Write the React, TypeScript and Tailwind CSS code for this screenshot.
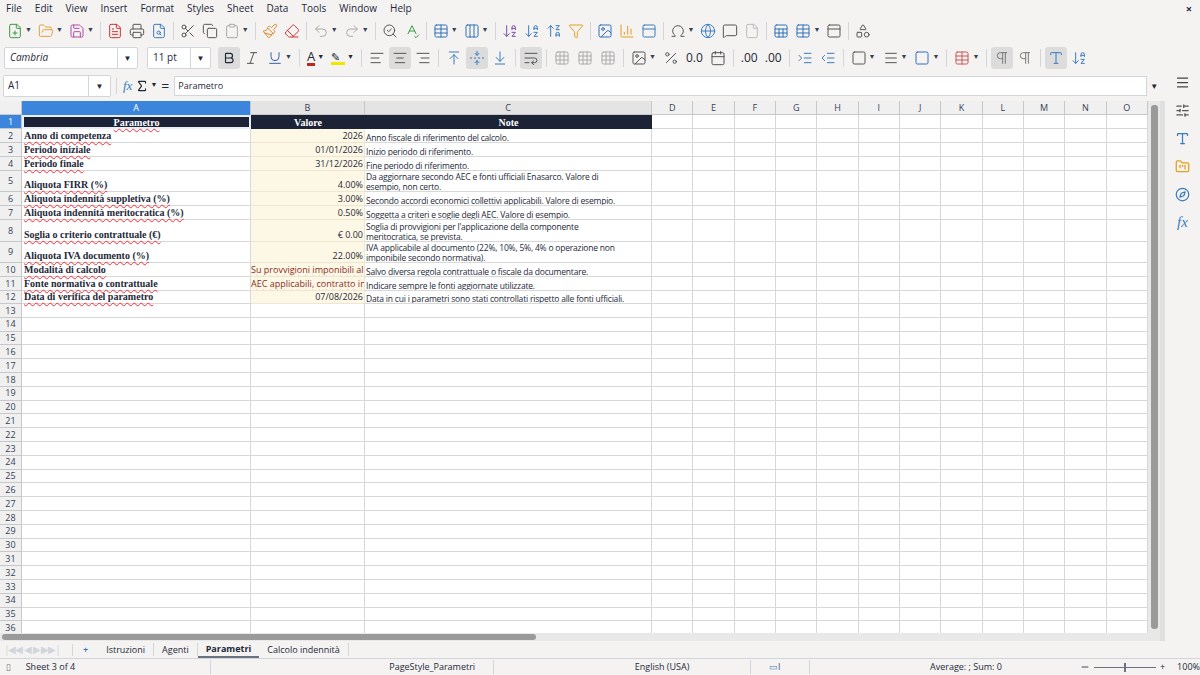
import React from "react";
import {
  FilePlus, FolderOpen, Save, FileText, Printer, FileSearch, Scissors, Copy, Clipboard, Paintbrush, Eraser,
  Undo2, Redo2, SearchCheck, SpellCheck, Table, Columns3, ArrowDownAZ, ArrowUpZA, Filter, Image, BarChart3,
  Omega, Globe, MessageSquare, File, Sheet, PanelTop, Shapes, Bold, Italic, Underline, AlignLeft, AlignCenter,
  AlignRight, ArrowUpToLine, FoldVertical, ArrowDownToLine, WrapText, Grid3x3, Percent, Calendar, IndentIncrease,
  IndentDecrease, Square, Minus, Menu, SlidersHorizontal, Type, FolderKanban, Compass, Pilcrow, Sigma
} from "lucide-react";

const sans = { fontFamily: '"Open Sans","Noto Sans",sans-serif' };
const serif = { fontFamily: '"Liberation Serif","DejaVu Serif",serif' };

const Ic = ({ I, c = "#555", dd }: { I: any; c?: string; dd?: boolean }) => (
  <div className="flex items-center h-[22px] px-[3px]">
    <I size={16} color={c} strokeWidth={1.5} />
    {dd && <span className="text-[7px] text-gray-700 ml-[2px]">▼</span>}
  </div>
);
const Sep = () => <div className="w-px h-[18px] bg-gray-300 mx-[3px]" />;

const rowsData: { h: number; a: string; b: string; c: string[]; bl?: boolean }[] = [
  { h: 14, a: "Anno di competenza", b: "2026", c: ["Anno fiscale di riferimento del calcolo."] },
  { h: 14, a: "Periodo iniziale", b: "01/01/2026", c: ["Inizio periodo di riferimento."] },
  { h: 14, a: "Periodo finale", b: "31/12/2026", c: ["Fine periodo di riferimento."] },
  { h: 21, a: "Aliquota FIRR (%)", b: "4.00%", c: ["Da aggiornare secondo AEC e fonti ufficiali Enasarco. Valore di", "esempio, non certo."] },
  { h: 14, a: "Aliquota indennità suppletiva (%)", b: "3.00%", c: ["Secondo accordi economici collettivi applicabili. Valore di esempio."] },
  { h: 14, a: "Aliquota indennità meritocratica (%)", b: "0.50%", c: ["Soggetta a criteri e soglie degli AEC. Valore di esempio."] },
  { h: 22, a: "Soglia o criterio contrattuale (€)", b: "€ 0.00", c: ["Soglia di provvigioni per l'applicazione della componente", "meritocratica, se prevista."] },
  { h: 21, a: "Aliquota IVA documento (%)", b: "22.00%", c: ["IVA applicabile al documento (22%, 10%, 5%, 4% o operazione non", "imponibile secondo normativa)."] },
  { h: 14, a: "Modalità di calcolo", b: "Su provvigioni imponibili al", c: ["Salvo diversa regola contrattuale o fiscale da documentare."], bl: true },
  { h: 14, a: "Fonte normativa o contrattuale", b: "AEC applicabili, contratto in", c: ["Indicare sempre le fonti aggiornate utilizzate."], bl: true },
  { h: 13, a: "Data di verifica del parametro", b: "07/08/2026", c: ["Data in cui i parametri sono stati controllati rispetto alle fonti ufficiali."] },
];

const extra = ["D", "E", "F", "G", "H", "I", "J", "K", "L", "M", "N", "O"];
const wavy = "underline decoration-wavy decoration-red-500 decoration-[1px] underline-offset-2";

function Extra() {
  return (
    <>
      {extra.map((e) => (
        <div key={e} className="w-[41.33px] shrink-0 border-r border-b border-[#d8d8d8]" />
      ))}
    </>
  );
}
function RowHead({ n, h, sel }: { n: number; h: number; sel?: boolean }) {
  return (
    <div
      className={`w-[22px] shrink-0 flex items-center justify-center text-[9px] border-r border-b border-[#c8c8c8] ${sel ? "bg-[#3b86dc] text-white" : "bg-[#f0f0f0] text-gray-700"}`}
      style={{ height: h, ...sans }}
    >
      {n}
    </div>
  );
}

export default function App() {
  return (
    <div className="w-[1200px] h-[675px] bg-[#f4f3f1] overflow-hidden flex flex-col text-gray-800" style={sans}>
      <div className="h-[17px] flex items-center text-[10px] px-[6px] gap-[13px] relative">
        {["File", "Edit", "View", "Insert", "Format", "Styles", "Sheet", "Data", "Tools", "Window", "Help"].map((m) => (
          <span key={m}>{m}</span>
        ))}
        <span className="absolute right-[8px] top-[1px] text-[11px] font-bold">×</span>
      </div>
      <div className="h-[27px] flex items-center px-[4px]">
        <Ic I={FilePlus} c="#3a9a45" dd /><Ic I={FolderOpen} c="#e2a23b" dd /><Ic I={Save} c="#b04aa8" dd /><Sep />
        <Ic I={FileText} c="#c33" /><Ic I={Printer} /><Ic I={FileSearch} c="#3b7bbf" /><Sep />
        <Ic I={Scissors} /><Ic I={Copy} /><Ic I={Clipboard} c="#aaa" dd /><Sep />
        <Ic I={Paintbrush} c="#d98a2b" /><Ic I={Eraser} c="#c33" /><Sep />
        <Ic I={Undo2} c="#aaa" dd /><Ic I={Redo2} c="#aaa" dd /><Sep />
        <Ic I={SearchCheck} /><Ic I={SpellCheck} c="#3a9a45" /><Sep />
        <Ic I={Table} c="#2f6fb8" dd /><Ic I={Columns3} c="#2f6fb8" dd /><Sep />
        <Ic I={ArrowDownAZ} c="#7a4ca8" /><Ic I={ArrowDownAZ} c="#3b7bbf" /><Ic I={ArrowUpZA} c="#3b7bbf" /><Ic I={Filter} c="#e0a020" /><Sep />
        <Ic I={Image} c="#2f6fb8" /><Ic I={BarChart3} c="#e0a020" /><Ic I={PanelTop} c="#3b7bbf" /><Sep />
        <Ic I={Omega} dd /><Ic I={Globe} c="#3b7bbf" /><Ic I={MessageSquare} /><Ic I={File} c="#bbb" /><Sep />
        <Ic I={Sheet} c="#2f6fb8" /><Ic I={Table} c="#2f6fb8" dd /><Ic I={PanelTop} /><Sep />
        <Ic I={Shapes} />
      </div>
      <div className="h-[27px] flex items-center px-[4px] gap-[1px]">
        <div className="w-[134px] h-[22px] bg-white border border-gray-300 rounded-[2px] flex items-center text-[10px] italic pl-[5px] justify-between">
          Cambria<span className="w-[20px] border-l border-gray-300 h-full flex items-center justify-center not-italic text-[8px]">▼</span>
        </div>
        <div className="w-[64px] h-[22px] ml-[8px] bg-white border border-gray-300 rounded-[2px] flex items-center text-[10px] pl-[5px] justify-between">
          11 pt<span className="w-[20px] border-l border-gray-300 h-full flex items-center justify-center text-[8px]">▼</span>
        </div>
        <div className="ml-[6px] w-[22px] h-[22px] bg-[#dcdcdc] rounded-[3px] flex items-center justify-center"><Bold size={14} /></div>
        <Ic I={Italic} /><Ic I={Underline} c="#3b5fa8" dd /><Sep />
        <div className="flex items-center px-[3px]"><span className="text-[13px] border-b-[3px] border-[#c0261e] leading-[14px]">A</span><span className="text-[7px] ml-[2px]">▼</span></div>
        <div className="flex items-center px-[3px]"><span className="w-[14px] h-[14px] border-b-[3px] border-[#f2e600] text-[11px] leading-[11px]">✎</span><span className="text-[7px] ml-[2px]">▼</span></div>
        <Sep />
        <Ic I={AlignLeft} /><div className="bg-[#dcdcdc] rounded-[3px]"><Ic I={AlignCenter} /></div><Ic I={AlignRight} /><Sep />
        <Ic I={ArrowUpToLine} c="#3b7bbf" /><div className="bg-[#dcdcdc] rounded-[3px]"><Ic I={FoldVertical} c="#3b7bbf" /></div><Ic I={ArrowDownToLine} c="#3b7bbf" /><Sep />
        <div className="bg-[#dcdcdc] rounded-[3px]"><Ic I={WrapText} /></div><Sep />
        <Ic I={Grid3x3} c="#aaa" /><Ic I={Grid3x3} c="#aaa" /><Ic I={Grid3x3} c="#aaa" /><Sep />
        <Ic I={Image} dd /><Ic I={Percent} /><span className="text-[12px] px-[3px]">0.0</span><Ic I={Calendar} /><Sep />
        <span className="text-[12px] px-[3px]">.00</span><span className="text-[12px] px-[3px]">.00</span><Sep />
        <Ic I={IndentIncrease} c="#3b7bbf" /><Ic I={IndentDecrease} c="#3b7bbf" /><Sep />
        <Ic I={Square} dd /><Ic I={Menu} dd /><Ic I={Square} c="#2f6fb8" dd /><Sep />
        <Ic I={Table} c="#c55" dd /><Sep />
        <div className="bg-[#dcdcdc] rounded-[3px]"><Ic I={Pilcrow} c="#777" /></div><Ic I={Pilcrow} c="#777" /><Sep />
        <div className="bg-[#dcdcdc] rounded-[3px]"><Ic I={Type} c="#3b7bbf" /></div><Ic I={ArrowDownAZ} c="#3b7bbf" />
      </div>
      <div className="h-[25px] mt-[2px] flex items-center pl-[3px]">
        <div className="w-[108px] h-[22px] bg-white border border-gray-300 rounded-[2px] flex items-center justify-between text-[10px] pl-[4px]">
          A1<span className="w-[22px] border-l border-gray-300 h-full flex items-center justify-center text-[8px]">▼</span>
        </div>
        <div className="w-px h-[16px] bg-gray-300 ml-[5px]" />
        <span className="text-[13px] italic text-[#3b7bbf] ml-[6px]" style={serif}>fx</span>
        <Sigma size={14} className="ml-[3px]" /><span className="text-[7px] ml-[1px]">▼</span>
        <span className="text-[14px] ml-[4px]">=</span>
        <div className="ml-[5px] w-[973px] h-[20px] bg-white border border-gray-300 text-[9px] flex items-center pl-[3px]">Parametro</div>
        <span className="text-[8px] ml-[3px]">▼</span>
      </div>
      <div className="flex flex-1 min-h-0 mt-[3px]">
        <div className="w-[1160px] flex flex-col bg-white">
          <div className="flex flex-1 min-h-0">
            <div className="w-[1148px] flex flex-col overflow-hidden">
              <div className="flex h-[14px] text-[9px] text-gray-700 shrink-0">
                <div className="w-[22px] bg-[#f0f0f0] border-r border-b border-[#c8c8c8]" />
                <div className="w-[229px] bg-[#3b86dc] text-white flex items-center justify-center border-r border-[#c8c8c8]">A</div>
                <div className="w-[114px] bg-[#e4e4e4] flex items-center justify-center border-r border-b border-[#c8c8c8]">B</div>
                <div className="w-[287px] bg-[#e4e4e4] flex items-center justify-center border-r border-b border-[#c8c8c8]">C</div>
                {extra.map((e) => (
                  <div key={e} className="w-[41.33px] bg-[#f0f0f0] flex items-center justify-center border-r border-b border-[#c8c8c8]">{e}</div>
                ))}
              </div>
              <div className="flex h-[14px] shrink-0">
                <RowHead n={1} h={14} sel />
                <div className="w-[229px] bg-[#1c2336] text-white text-[10px] font-bold flex items-center justify-center border-2 border-[#e9eef6]" style={serif}>
                  <span className={wavy}>Parametro</span>
                </div>
                <div className="w-[114px] bg-[#1c2336] text-white text-[10px] font-bold flex items-center justify-center" style={serif}><span className={wavy}>Valore</span></div>
                <div className="w-[287px] bg-[#1c2336] text-white text-[10px] font-bold flex items-center justify-center" style={serif}>Note</div>
                <Extra />
              </div>
              {rowsData.map((r, i) => (
                <div key={i} className="flex shrink-0" style={{ height: r.h }}>
                  <RowHead n={i + 2} h={r.h} />
                  <div className="w-[229px] border-r border-b border-[#d8d8d8] flex items-end pl-[2px] text-[10px] font-bold leading-[12px] whitespace-nowrap" style={serif}>
                    <span className={wavy}>{r.a}</span>
                  </div>
                  <div className={`w-[114px] bg-[#fdf8e6] border-r border-b border-[#ece6d2] flex items-end text-[9px] leading-[12px] whitespace-nowrap overflow-hidden ${r.bl ? "justify-start text-[#8a2c1e]" : "justify-end pr-[1px]"}`}>
                    <span className={r.bl ? wavy : ""}>{r.b}</span>
                  </div>
                  <div className="w-[287px] border-r border-b border-[#d8d8d8] flex flex-col justify-end pl-[1px] text-[8.5px] leading-[9.5px] whitespace-nowrap overflow-hidden">
                    {r.c.map((t, j) => <div key={j} className="tracking-[-0.2px]">{t}</div>)}
                  </div>
                  <Extra />
                </div>
              ))}
              {Array.from({ length: 24 }, (_, k) => (
                <div key={k} className="flex shrink-0 h-[13.8px]">
                  <RowHead n={k + 13} h={13.8} />
                  <div className="w-[229px] border-r border-b border-[#d8d8d8]" />
                  <div className="w-[114px] border-r border-b border-[#d8d8d8]" />
                  <div className="w-[287px] border-r border-b border-[#d8d8d8]" />
                  <Extra />
                </div>
              ))}
            </div>
            <div className="w-[12px] bg-[#e8e8e8] flex justify-center pt-[4px] pb-[4px]">
              <div className="w-[7px] h-full bg-[#9a9a9a] rounded-[3px]" />
            </div>
          </div>
          <div className="h-[8px] bg-[#e8e8e8] flex items-center px-[2px] shrink-0">
            <div className="w-[534px] h-[6px] bg-[#9a9a9a] rounded-[3px]" />
          </div>
        </div>
        <div className="w-[5px] bg-[#e0e0e0]" />
        <div className="flex-1 flex flex-col items-center gap-[13px] pt-[2px] -mt-[28px]">
          <Menu size={15} color="#444" />
          <SlidersHorizontal size={15} color="#555" />
          <Type size={15} color="#3b7bbf" />
          <FolderKanban size={15} color="#e0a020" />
          <Compass size={15} color="#3b7bbf" />
          <span className="text-[15px] italic text-[#3b7bbf] leading-[15px]" style={serif}>fx</span>
        </div>
      </div>
      <div className="h-[17px] flex items-center text-[9px] bg-[#f4f3f1]">
        <span className="text-gray-300 text-[10px] w-[72px] pl-[4px] tracking-[-1px]">|◀◀ ◀ ▶ ▶▶|</span>
        <div className="w-px h-[12px] bg-gray-300" />
        <span className="text-[#3b7bbf] font-bold px-[10px]">+</span>
        <span className="px-[8px] border-r border-gray-300">Istruzioni</span>
        <span className="px-[8px] border-r border-gray-300">Agenti</span>
        <span className="px-[8px] font-bold border-b-2 border-gray-500 h-full flex items-center">Parametri</span>
        <span className="px-[8px] border-r border-gray-300">Calcolo indennità</span>
      </div>
      <div className="h-[17px] flex items-center text-[9px] border-t border-gray-300">
        <span className="w-[20px] pl-[6px] text-gray-500">▯</span>
        <span className="w-[195px] pl-[6px]">Sheet 3 of 4</span>
        <div className="w-[285px] border-l border-gray-300 pl-[178px] whitespace-nowrap">PageStyle_Parametri</div>
        <div className="w-[260px] border-l border-gray-300 pl-[141px] whitespace-nowrap">English (USA)</div>
        <div className="w-[60px] border-l border-gray-300 pl-[18px] text-[#3b7bbf]">▭<span className="text-gray-600">I</span></div>
        <div className="w-[250px] border-l border-gray-300 pl-[120px] whitespace-nowrap">Average: ; Sum: 0</div>
        <div className="flex items-center gap-[4px] pl-[24px]">
          <Minus size={10} />
          <div className="w-[62px] h-px bg-gray-500 relative"><div className="absolute left-[30px] -top-[4px] w-[2px] h-[9px] bg-gray-500" /></div>
          <span>+</span><span className="ml-[8px]">100%</span>
        </div>
      </div>
    </div>
  );
}
